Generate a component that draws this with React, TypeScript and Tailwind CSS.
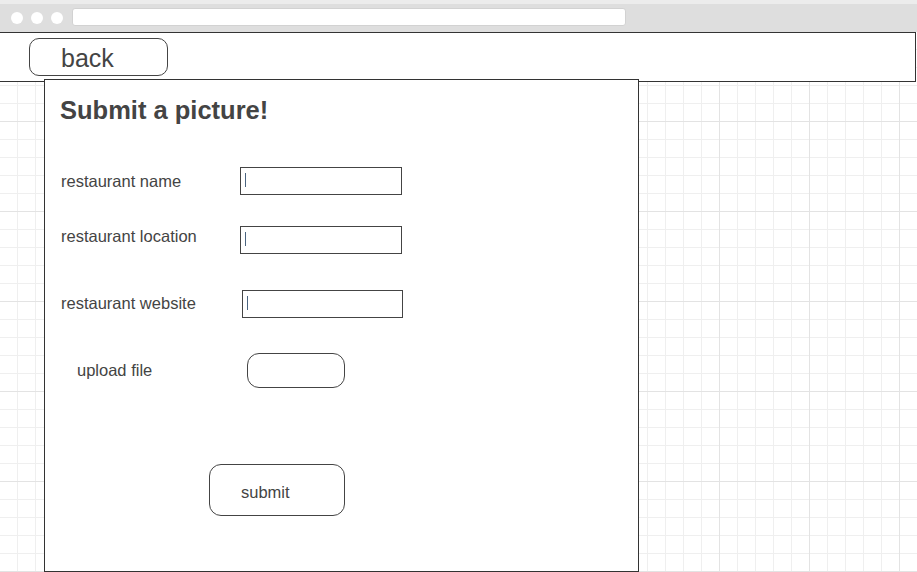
import React from "react";

function Field({ label, labelMt, inputMl, inputW, mt }: { label: string; labelMt: string; inputMl: string; inputW: string; mt: string }) {
  return (
    <div className={`flex items-start ${mt}`}>
      <div className={`w-[179px] shrink-0 text-[16.5px] leading-[20px] text-[#444] ${labelMt}`}>{label}</div>
      <div className={`${inputMl} ${inputW} h-[28px] border border-[#444] bg-white pl-[4px] pt-[5px]`}>
        <div className="w-px h-[14px] bg-[#4a6480]" />
      </div>
    </div>
  );
}

export default function App() {
  return (
    <div className="w-[917px] h-[572px] overflow-hidden bg-white flex flex-col font-['Liberation_Sans',Arial,sans-serif]">
      {/* browser chrome */}
      <div className="h-[32px] shrink-0 bg-[#dedede] border-t-[4px] border-[#ececec] flex items-center">
        <div className="flex items-center gap-[8px] pl-[11px] -mt-[1px]">
          <div className="w-[12px] h-[12px] rounded-full bg-white" />
          <div className="w-[12px] h-[12px] rounded-full bg-white" />
          <div className="w-[12px] h-[12px] rounded-full bg-white" />
        </div>
        <div className="ml-[9px] w-[554px] h-[18px] -mt-[3px] rounded-[3px] bg-white border border-[#d2d2d2]" />
      </div>

      {/* canvas with grid */}
      <div className="flex-1 flex flex-col bg-white bg-[linear-gradient(to_right,#e3e3e3_1px,transparent_1px),linear-gradient(to_bottom,#e3e3e3_1px,transparent_1px),linear-gradient(to_right,#efefef_1px,transparent_1px),linear-gradient(to_bottom,#efefef_1px,transparent_1px)] bg-[size:90px_90px,90px_90px,18px_18px,18px_18px] bg-[position:89px_89px,89px_89px,17px_17px,17px_17px]">
        {/* header bar */}
        <div className="h-[50px] w-[916px] shrink-0 bg-white border-t border-r border-b border-[#333] flex items-start">
          <div className="ml-[29px] mt-[5px] w-[139px] h-[38px] rounded-[10px] border border-[#444] flex items-center pl-[31px] pt-[2px] text-[25px] leading-[30px] text-[#444]">
            back
          </div>
        </div>

        {/* main panel */}
        <div className="relative z-10 -mt-[3px] ml-[44px] w-[595px] h-[493px] bg-white border border-[#333] pl-[16px] pt-[16px] flex flex-col">
          <h1 className="-ml-px text-[25.5px] leading-[28px] font-bold text-[#444]">Submit a picture!</h1>

          <Field label="restaurant name" labelMt="mt-[4px]" inputMl="ml-0" inputW="w-[162px]" mt="mt-[43px]" />
          <Field label="restaurant location" labelMt="mt-0" inputMl="ml-0" inputW="w-[162px]" mt="mt-[31px]" />
          <Field label="restaurant website" labelMt="mt-[3px]" inputMl="ml-[2px]" inputW="w-[161px]" mt="mt-[36px]" />

          <div className="flex items-start mt-[35px]">
            <div className="ml-[16px] w-[170px] shrink-0 mt-[7px] text-[16.5px] leading-[20px] text-[#444]">upload file</div>
            <div className="w-[98px] h-[35px] rounded-[12px] border border-[#444] bg-white" />
          </div>

          <div className="mt-[76px] ml-[148px] w-[136px] h-[52px] rounded-[12px] border border-[#444] flex items-center pl-[31px] pt-[3px] text-[16.5px] leading-[20px] text-[#444]">
            submit
          </div>
        </div>
      </div>
    </div>
  );
}
